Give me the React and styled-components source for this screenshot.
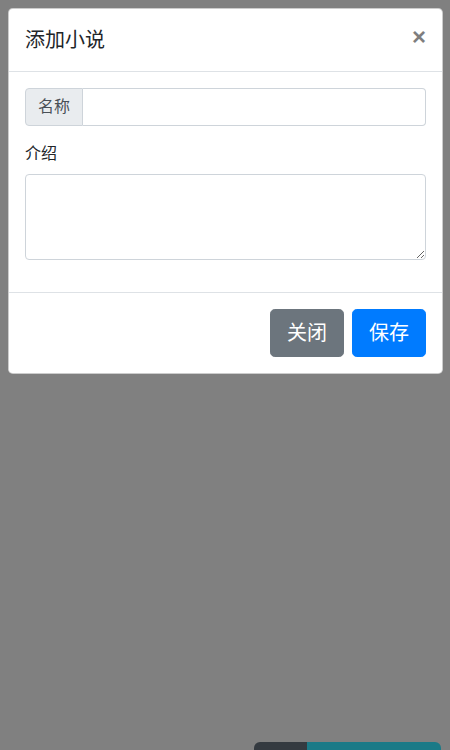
import React from "react";
import styled, { createGlobalStyle } from "styled-components";

const Global = createGlobalStyle`
  html, body { margin: 0; padding: 0; }
  body {
    background: #808080;
    font-family: "Liberation Sans", "Noto Sans CJK SC", sans-serif;
    font-size: 16px;
    line-height: 1.5;
    color: #212529;
    height: 750px;
    overflow: hidden;
  }
  * { box-sizing: border-box; }
`;

const Page = styled.div`
  height: 750px;
  padding: 8px 7px 8px 8px;
`;

const BottomBar = styled.div`
  position: fixed;
  left: 254px;
  right: 9px;
  top: 742px;
  height: 40px;
  display: flex;
`;

const BarButton = styled.div`
  height: 100%;
  background: ${(p) => p.$bg};
  width: ${(p) => p.$w || "auto"};
  flex: ${(p) => (p.$grow ? 1 : "none")};
  border-radius: ${(p) => (p.$first ? "6px 0 0 6px" : "0 6px 6px 0")};
`;

const Modal = styled.div`
  position: relative;
  z-index: 2;
  width: 435px;
  background: #fff;
  border: 1px solid rgba(0, 0, 0, 0.2);
  border-radius: 4.8px;
  display: flex;
  flex-direction: column;
`;

const Header = styled.div`
  display: flex;
  align-items: flex-start;
  justify-content: space-between;
  padding: 16px;
  border-bottom: 1px solid #dee2e6;
`;

const Title = styled.h5`
  margin: 0;
  font-size: 20px;
  font-weight: 400;
  line-height: 1.5;
`;

const Close = styled.button`
  padding: 16px;
  margin: -16px -16px -16px auto;
  background: transparent;
  border: 0;
  font-family: "Liberation Sans", sans-serif;
  font-size: 24px;
  font-weight: 700;
  line-height: 1;
  color: #000;
  opacity: 0.5;
  cursor: pointer;
`;

const Body = styled.div`
  padding: 16px;
`;

const InputGroup = styled.div`
  display: flex;
  margin-bottom: 16px;
`;

const Prepend = styled.span`
  display: flex;
  align-items: center;
  padding: 6px 12px;
  background: #e9ecef;
  border: 1px solid #ced4da;
  border-radius: 4px 0 0 4px;
  color: #495057;
  font-size: 16px;
  line-height: 1.5;
  height: 38px;
`;

const TextInput = styled.input`
  flex: 1;
  min-width: 0;
  height: 38px;
  padding: 6px 12px;
  border: 1px solid #ced4da;
  border-left: 0;
  border-radius: 0 4px 4px 0;
  font: inherit;
  color: #495057;
  outline: none;
`;

const FormGroup = styled.div`
  margin-bottom: 16px;
`;

const Label = styled.label`
  display: block;
  margin-bottom: 8px;
  line-height: 24px;
`;

const TextArea = styled.textarea`
  display: block;
  width: 100%;
  height: 86px;
  padding: 6px 12px;
  border: 1px solid #ced4da;
  border-radius: 4px;
  font: inherit;
  color: #495057;
  resize: vertical;
  outline: none;
`;

const Footer = styled.div`
  display: flex;
  justify-content: flex-end;
  align-items: center;
  padding: 12px;
  border-top: 1px solid #dee2e6;
`;

const Button = styled.button`
  margin: 4px;
  height: 48px;
  padding: 8px 16px;
  font-family: "Liberation Sans", "Noto Sans CJK SC", sans-serif;
  font-size: 20px;
  line-height: 1.5;
  border-radius: 4.8px;
  border: 1px solid ${(p) => p.$bg};
  background: ${(p) => p.$bg};
  color: #fff;
  cursor: pointer;
`;

export default function App() {
  return (
    <>
      <Global />
      <Page>
        <Modal>
          <Header>
            <Title>添加小说</Title>
            <Close aria-label="Close">×</Close>
          </Header>
          <Body>
            <InputGroup>
              <Prepend>名称</Prepend>
              <TextInput type="text" />
            </InputGroup>
            <FormGroup>
              <Label>介绍</Label>
              <TextArea rows={3} />
            </FormGroup>
          </Body>
          <Footer>
            <Button $bg="#6c757d">关闭</Button>
            <Button $bg="#007bff">保存</Button>
          </Footer>
        </Modal>
      </Page>
      <BottomBar>
        <BarButton $first $w="53px" $bg="#343a40" />
        <BarButton $grow $bg="#1a7a87" />
      </BottomBar>
    </>
  );
}
